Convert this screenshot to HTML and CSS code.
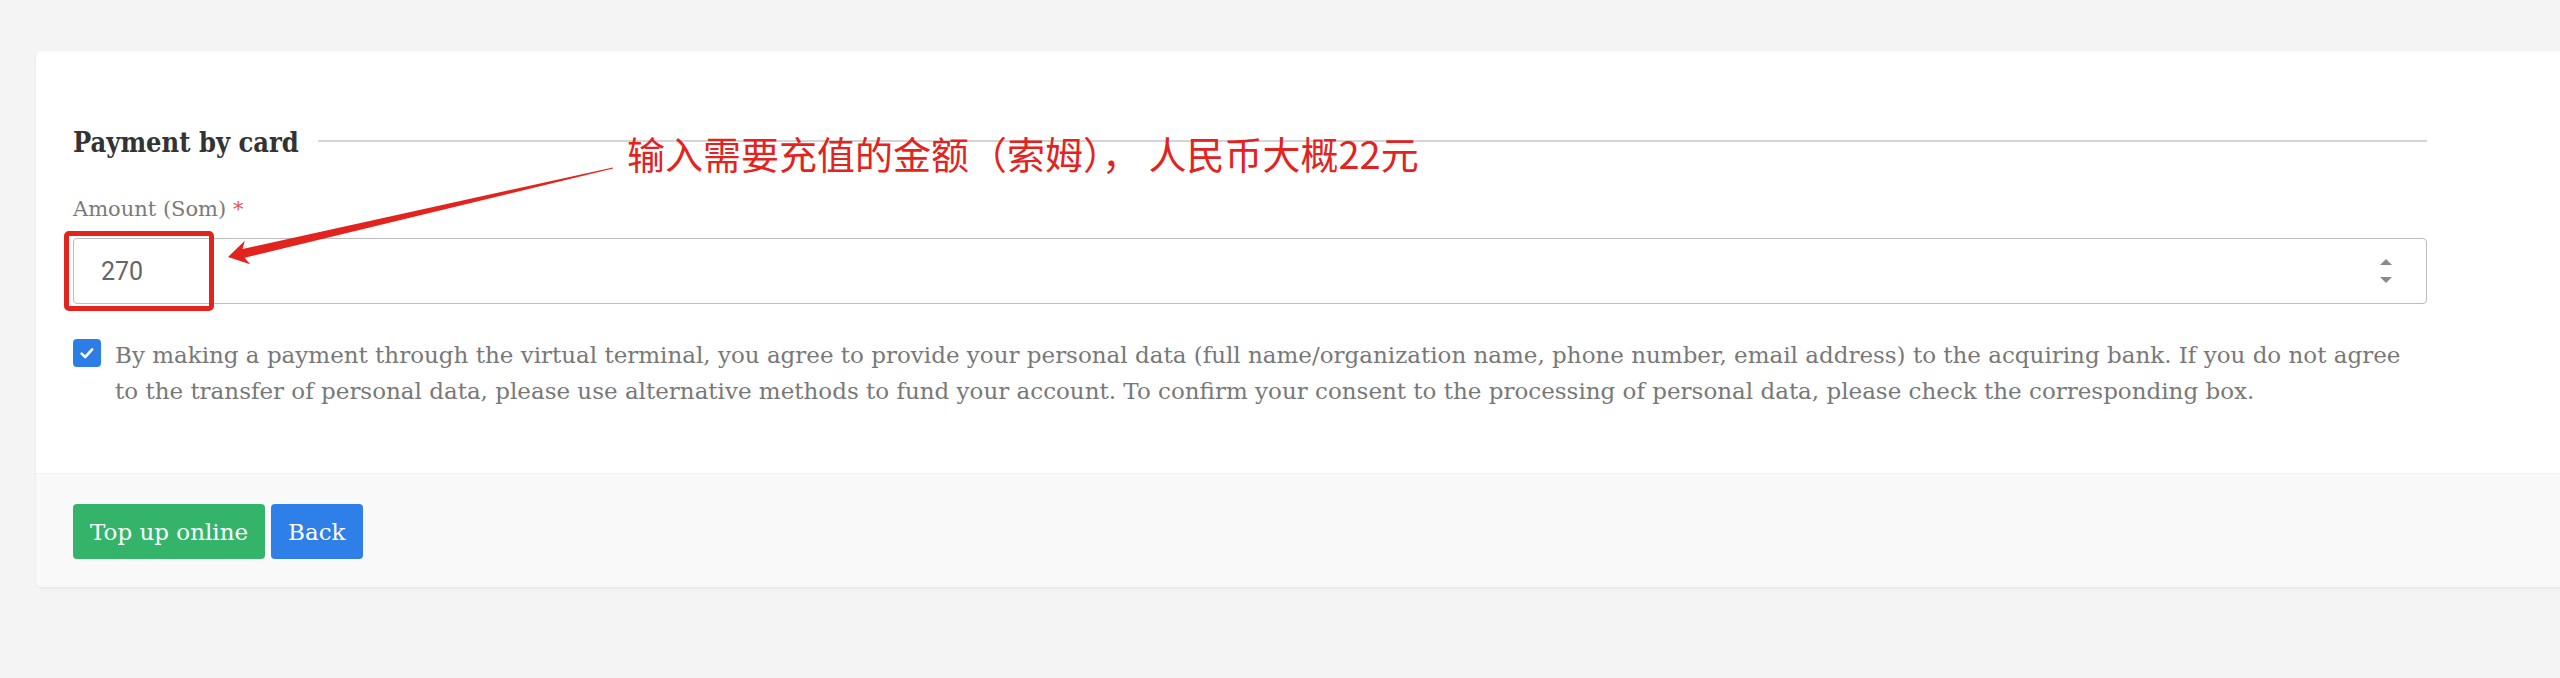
FILE: index.html
```html
<!DOCTYPE html>
<html>
<head>
  <meta charset="utf-8">
  <title>Payment by card</title>
  <link rel="stylesheet" href="styles.css">
</head>
<body>
  <div class="card">
    <div class="card-body">
      <form class="pay-form">
        <div class="legend">
          <h3>Payment by card</h3>
          <div class="legend-line"></div>
        </div>

        <label class="field-label" for="amount">Amount (Som) <span class="req">*</span></label>
        <div class="num-input">
          <input id="amount" type="text" value="270">
          <span class="spin"><i class="up"></i><i class="down"></i></span>
        </div>

        <label class="consent">
          <span class="check">
            <svg width="28" height="28" viewBox="0 0 28 28"><path d="M8.6 14.6 L12.2 18 L19.2 10.4" fill="none" stroke="#fff" stroke-width="2.6" stroke-linecap="round" stroke-linejoin="round"/></svg>
          </span>
          <span class="consent-text">By making a payment through the virtual terminal, you agree to provide your personal data (full name/organization name, phone number, email address) to the acquiring bank. If you do not agree to the transfer of personal data, please use alternative methods to fund your account. To confirm your consent to the processing of personal data, please check the corresponding box.</span>
        </label>
      </form>
    </div>
    <div class="card-footer">
      <button class="btn btn-green" type="button">Top up online</button>
      <button class="btn btn-blue" type="button">Back</button>
    </div>
  </div>

  <!-- red annotation drawn over the screenshot -->
  <div class="note-box"></div>
  <svg class="note-arrow" width="700" height="320" viewBox="0 0 700 320">
    <polygon points="228,257 250.2,264.2 244.6,257.8 613.1,168.6 612.9,167.4 242.6,249 244.8,240.8" fill="#e3231e"/>
  </svg>
  <div class="note-text">输入需要充值的金额（索姆）， 人民币大概22元</div>
</body>
</html>
```

FILE: styles.css
```css
body {
  margin: 0;
  height: 678px;
  position: relative;
  overflow: hidden;
  background-color: #f4f4f4;
  font-family: "DejaVu Serif", serif;
}

/* --- Card --- */
.card {
  margin: 51px -60px 0 36px;
  background-color: #fff;
  border-radius: 5px;
  box-shadow: 0 1px 3px rgba(0, 0, 0, 0.07);
}
.card-body { padding: 76px 37px 64px; }
.pay-form { width: 2354px; }

.legend { display: flex; align-items: center; gap: 19px; height: 32px; }
.legend h3 {
  margin: 0;
  font-size: 27px;
  line-height: 32px;
  font-weight: bold;
  font-stretch: condensed;
  color: #333;
}
.legend-line { flex: 1; border-top: 2px solid #d4d4d4; margin-top: -5px; }

.field-label {
  display: block;
  margin-top: 38px;
  font-size: 21px;
  line-height: 24px;
  color: #7a7a7a;
}
.req { color: #e05a5a; }

/* --- Number input --- */
.num-input {
  margin-top: 17px;
  height: 66px;
  box-sizing: border-box;
  border: 1px solid #bdbdbd;
  border-radius: 4px;
  display: flex;
  align-items: center;
  padding: 0 34px 0 27px;
}
.num-input input {
  flex: 1;
  border: 0;
  outline: 0;
  padding: 0;
  background: transparent;
  font-family: Roboto, sans-serif;
  font-size: 25px;
  color: #666;
}
.spin { display: flex; flex-direction: column; gap: 12px; width: 12px; }
.spin i {
  width: 0; height: 0;
  border-left: 6px solid transparent;
  border-right: 6px solid transparent;
}
.spin .up { border-bottom: 6px solid #8a8a8a; }
.spin .down { border-top: 6px solid #8a8a8a; }

/* --- Consent checkbox --- */
.consent { display: flex; gap: 14px; margin-top: 33px; align-items: flex-start; }
.check {
  flex: none;
  width: 28px; height: 28px;
  margin-top: 2px;
  border-radius: 4px;
  background-color: #2d7de6;
  display: flex;
}
.consent-text {
  font-size: 23px;
  line-height: 36px;
  color: #787878;
}

/* --- Footer / buttons --- */
.card-footer {
  display: flex;
  gap: 6px;
  padding: 30px 37px 28px;
  background-color: #f9f9f9;
  border-top: 1px solid #f0f0f0;
  border-radius: 0 0 5px 5px;
}
.btn {
  height: 55px;
  padding: 0 17px;
  border: 0;
  border-radius: 4px;
  font-family: "DejaVu Serif", serif;
  font-size: 23px;
  color: #fff;
  cursor: pointer;
}
.btn-green { background-color: #33b46a; }
.btn-blue { background-color: #2e7fe8; }

/* --- Annotation overlay --- */
.note-box {
  position: absolute;
  left: 64px; top: 231px;
  width: 150px; height: 80px;
  box-sizing: border-box;
  border: 5px solid #e3231e;
  border-radius: 5px;
}
.note-arrow { position: absolute; left: 0; top: 0; }
.note-text {
  position: absolute;
  left: 627px; top: 134px;
  font-family: "Noto Sans CJK SC", sans-serif;
  font-size: 38px;
  line-height: 1;
  color: #e3231e;
  white-space: nowrap;
}
```
